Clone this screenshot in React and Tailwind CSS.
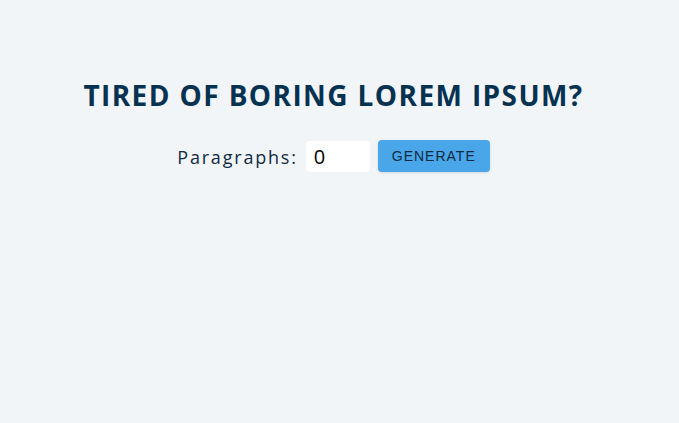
import { useState } from "react";

export default function App() {
  const [count, setCount] = useState(0);

  return (
    <main className="min-h-screen bg-[#f1f5f8] pt-[77px] pr-3 font-['Open_Sans','Noto_Sans',sans-serif]">
      <section className="flex flex-col items-center text-[#102a42]">
        <h3 className="text-center text-[28px] leading-9 font-bold tracking-wider text-[#063251] uppercase">
          Tired of boring lorem ipsum?
        </h3>
        <form
          className="mt-[27px] flex items-end justify-center gap-2"
          onSubmit={(event) => event.preventDefault()}
        >
          <label htmlFor="amount" className="text-[18px] leading-[29px] tracking-widest">
            Paragraphs:
          </label>
          <input
            type="number"
            id="amount"
            name="amount"
            value={count}
            onChange={(event) => setCount(event.target.value)}
            className="h-[31px] w-16 rounded border-0 bg-white px-2 pb-px text-[20px] leading-[30px] text-black outline-none"
          />
          <button
            type="submit"
            className="h-8 rounded bg-[#49a6e9] px-[14px] font-['Liberation_Sans',sans-serif] text-sm tracking-[1px] text-[#102a42] uppercase shadow-sm"
          >
            Generate
          </button>
        </form>
      </section>
    </main>
  );
}
